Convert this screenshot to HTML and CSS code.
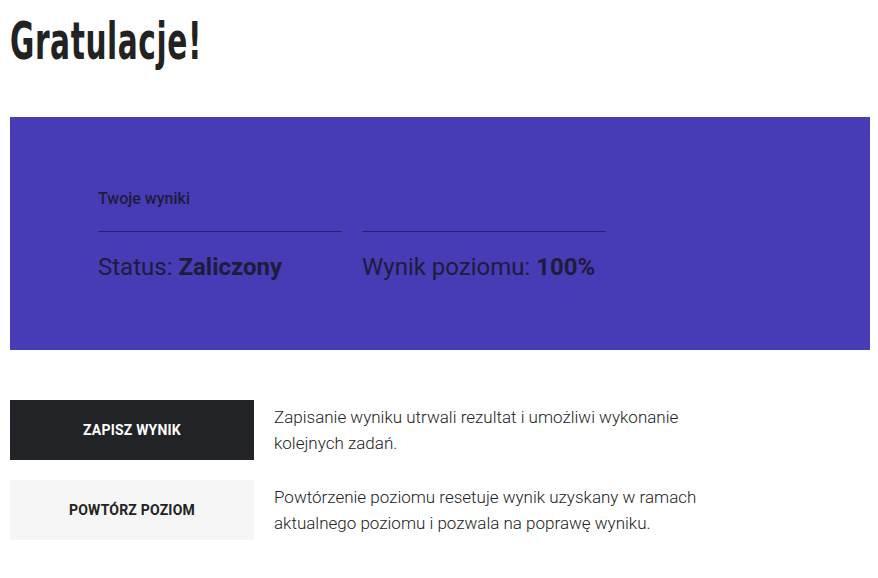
FILE: index.html
```html
<!DOCTYPE html>
<html lang="pl">
<head>
    <meta charset="UTF-8">
    <meta name="viewport" content="width=device-width, initial-scale=1.0">
    <title>Gratulacje</title>
    <link rel="stylesheet" href="styles.css">
</head>
<body>
    <h1 class="page-title"><span>Gratulacje!</span></h1>

    <section class="results">
        <h2 class="results-title">Twoje wyniki</h2>
        <div class="results-row">
            <div class="result-item">Status: <strong>Zaliczony</strong></div>
            <div class="result-item">Wynik poziomu: <strong>100%</strong></div>
        </div>
    </section>

    <div class="actions">
        <div class="action">
            <button class="btn btn-dark">Zapisz wynik</button>
            <p class="action-text">Zapisanie wyniku utrwali rezultat i umożliwi wykonanie kolejnych zadań.</p>
        </div>
        <div class="action">
            <button class="btn btn-light">Powtórz poziom</button>
            <p class="action-text">Powtórzenie poziomu resetuje wynik uzyskany w ramach aktualnego poziomu i pozwala na poprawę wyniku.</p>
        </div>
    </div>
</body>
</html>
```

FILE: styles.css
```css
/* General Reset */
* {
    margin: 0;
    padding: 0;
    box-sizing: border-box;
}

body {
    font-family: Roboto, sans-serif;
    color: #222;
    background-color: #fff;
    padding: 0 8px 0 10px;
}

/* Title */
.page-title {
    font-family: 'DejaVu Sans', sans-serif;
    font-weight: 700;
    font-size: 52px;
    line-height: 60px;
    padding-top: 11px;
    color: #222;
    margin-bottom: 46px;
}

/* no condensed face installed, squeeze the heading instead */
.page-title span {
    display: inline-block;
    transform: scaleX(0.57);
    transform-origin: left center;
    letter-spacing: 1px;
}

/* Results box */
.results {
    background-color: #473cb6;
    padding: 71px 88px 68px;
}

.results-title {
    font-size: 16px;
    font-weight: 500;
    line-height: 22px;
    color: #1f1b3a;
    margin-bottom: 21px;
}

.results-row {
    display: flex;
    gap: 20px;
}

.result-item {
    width: 244px;
    border-top: 1px solid #2a225e;
    padding-top: 20px;
    font-size: 24px;
    line-height: 30px;
    color: #1f1b3a;
    white-space: nowrap;
}

.result-item strong {
    font-weight: 700;
}

/* Actions */
.actions {
    margin-top: 50px;
    display: flex;
    flex-direction: column;
    gap: 20px;
}

.action {
    display: flex;
    gap: 20px;
    align-items: flex-start;
}

.btn {
    width: 244px;
    height: 60px;
    flex-shrink: 0;
    border: none;
    font-family: Roboto, sans-serif;
    font-size: 14px;
    font-weight: 700;
    text-transform: uppercase;
    letter-spacing: 0.2px;
    cursor: pointer;
}

.btn-dark {
    background-color: #222327;
    color: #fff;
}

.btn-light {
    background-color: #f5f5f5;
    color: #222;
}

.action-text {
    max-width: 430px;
    margin-top: 4px;
    font-size: 17px;
    font-weight: 300;
    line-height: 26px;
    color: #222;
}
```
